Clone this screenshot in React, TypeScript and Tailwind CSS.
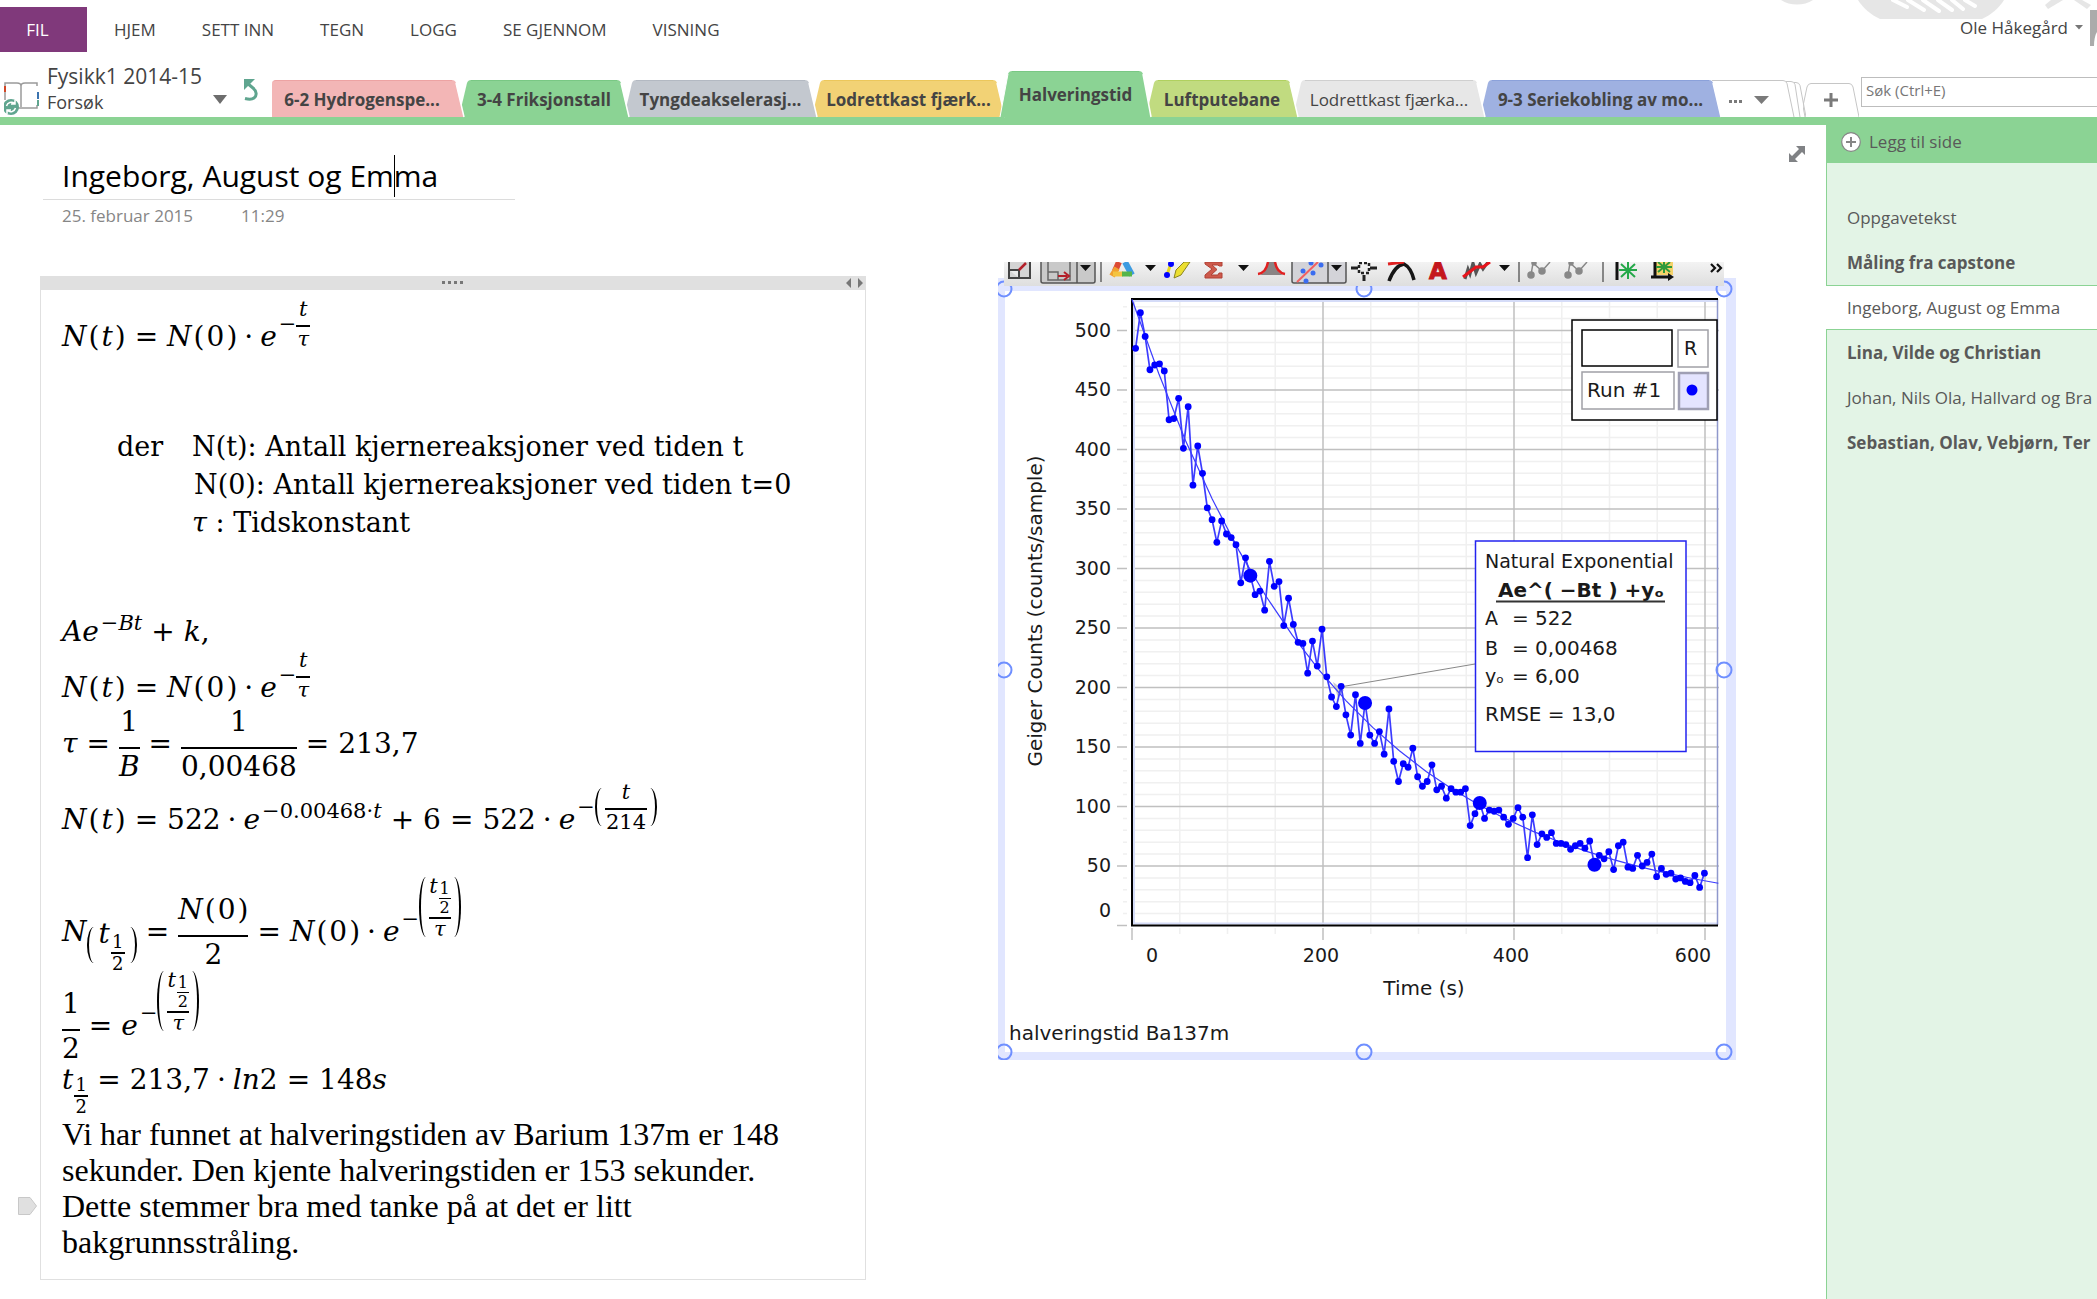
import React from 'react';
import clsx from 'clsx';

const MENU = ['HJEM', 'SETT INN', 'TEGN', 'LOGG', 'SE GJENNOM', 'VISNING'];

interface SectionTab {
  label: string;
  width: string;
  bg: string;
  fill: string;
  edge: string;
  bold: boolean;
  active?: boolean;
}

const TABS: SectionTab[] = [
  { label: '6-2 Hydrogenspe...', width: 'w-[192px]', bg: 'bg-[#f3b6b6]', fill: '#f3b6b6', edge: 'border-[#eda3a3]', bold: true },
  { label: '3-4 Friksjonstall', width: 'w-[170px]', bg: 'bg-[#8bd394]', fill: '#8bd394', edge: 'border-[#79c884]', bold: true },
  { label: 'Tyngdeakselerasj...', width: 'w-[193px]', bg: 'bg-[#c3c8cf]', fill: '#c3c8cf', edge: 'border-[#b3b9c2]', bold: true },
  { label: 'Lodrettkast fjærk...', width: 'w-[193px]', bg: 'bg-[#f2d275]', fill: '#f2d275', edge: 'border-[#ecc75b]', bold: true },
  { label: 'Halveringstid', width: 'w-[151px]', bg: 'bg-[#8bd394]', fill: '#8bd394', edge: 'border-[#79c884]', bold: true, active: true },
  { label: 'Luftputebane', width: 'w-[152px]', bg: 'bg-[#c1db80]', fill: '#c1db80', edge: 'border-[#b0d05f]', bold: true },
  { label: 'Lodrettkast fjærka...', width: 'w-[192px]', bg: 'bg-[#e7e7e7]', fill: '#e7e7e7', edge: 'border-[#cfcfcf]', bold: false },
  { label: '9-3 Seriekobling av mo...', width: 'w-[241px]', bg: 'bg-[#9fb1e1]', fill: '#9fb1e1', edge: 'border-[#8ba1da]', bold: true },
];

const PAGES = [
  { title: 'Oppgavetekst', bold: false },
  { title: 'Måling fra capstone', bold: true },
  { title: 'Ingeborg, August og Emma', bold: false, active: true },
  { title: 'Lina, Vilde og Christian', bold: true },
  { title: 'Johan, Nils Ola, Hallvard og Bra', bold: false },
  { title: 'Sebastian, Olav, Vebjørn, Ter', bold: true },
];

// Geiger counts, one sample every 5 s
const COUNTS = [
  485, 515, 495, 467, 471, 472, 466, 425, 426, 443, 401, 436, 370, 403, 380, 351, 341, 322, 340, 329,
  326, 320, 288, 309, 294, 278, 281, 265, 306, 285, 289, 252, 275, 253, 238, 237, 212, 239, 218, 249,
  209, 192, 184, 201, 177, 160, 194, 153, 187, 160, 153, 163, 144, 182, 138, 121, 136, 133, 149, 125,
  117, 121, 135, 114, 117, 107, 115, 112, 112, 115, 84, 94, 103, 90, 97, 96, 97, 91, 85, 90,
  99, 91, 57, 93, 68, 77, 74, 78, 69, 69, 68, 64, 67, 69, 65, 71, 51, 59, 56, 62,
  47, 67, 70, 49, 48, 59, 50, 53, 60, 41, 48, 43, 44, 39, 40, 37, 36, 42, 32, 44,
];

const px = (t: number) => 1132 + t * 0.955;
const py = (v: number) => 925.5 - v * 1.19;
const sampleX = (i: number) => 1135.6 + i * 4.78;

const Header: React.FC = () => (
  <header className="relative flex h-[52px] items-stretch pt-[7px]">
    {/* background decoration */}
    <svg className="absolute right-0 top-0" width="320" height="20" viewBox="1777 0 320 20" aria-hidden="true">
      <path d="M1781 0h32c-9 6-23 6-32 0z" fill="#e6e6e6" />
      <path d="M1858 0h146c-5 8-13 15-22 19h-102c-9-4-17-11-22-19z" fill="#e6e6e6" />
      <path d="M1893 0l14 7M1908 0l16 10M1923 0l16 11M1938 0l14 10M1952 0l11 9M1965 0l10 6" stroke="#fff" strokeWidth="4" strokeLinecap="round" />
      <path d="M2045 5l6-5h12l-15 9zM2074 0h8l9 5-4 4-13-9z" fill="#e6e6e6" />
    </svg>
    <nav className="flex items-stretch text-[17px] text-[#444]">
      <button className="w-[87px] bg-[#80397b] pr-3 text-white">FIL</button>
      <div className="flex pl-1">
        {MENU.map((m) => (
          <button key={m} className="px-[23px]">
            {m}
          </button>
        ))}
      </div>
    </nav>
    <button className="relative mb-1 ml-auto flex items-center gap-[7px] text-[17px] text-[#444]">
      Ole Håkegård
      <svg width="8" height="5" viewBox="0 0 8 5" aria-hidden="true">
        <path d="M0 0h8L4 4.5z" fill="#777" />
      </svg>
      <svg width="7" height="36" viewBox="0 0 7 36" aria-hidden="true">
        <path d="M0 0h7v22c-2 3-3 8-3 14H0z" fill="#ababab" />
      </svg>
    </button>
  </header>
);

const Tab: React.FC<{ tab: SectionTab; index: number }> = ({ tab, index }) => {
  const h = tab.active ? 46 : 37;
  return (
    <button
      className={clsx(
        'relative flex text-[17px] text-[#444]',
        tab.width,
        tab.active ? 'h-[46px]' : 'h-[37px]',
        index > 0 && '-ml-[5px]',
        tab.bold && 'font-bold',
      )}
      style={{ zIndex: tab.active ? 20 : 10 - index }}
    >
      {index > 0 && (
        <svg className="shrink-0 overflow-visible" width="12" height={h} viewBox={`0 0 12 ${h}`} aria-hidden="true">
          <path d={`M0 ${h}L8 3Q9 0 12 0V${h}z`} fill={tab.fill} />
          {tab.active && <path d={`M0 ${h}L8 3`} stroke="#fff" fill="none" />}
        </svg>
      )}
      <span
        className={clsx(
          'flex h-full flex-1 items-center justify-center whitespace-nowrap border-t',
          index === 0 && 'rounded-tl',
          !tab.active && 'pt-[2px]',
          tab.bg,
          tab.edge,
        )}
      >
        {tab.label}
      </span>
      <svg className="shrink-0 overflow-visible" width="12" height={h} viewBox={`0 0 12 ${h}`} aria-hidden="true">
        <path d={`M12 ${h}L4 3Q3 0 0 0V${h}z`} fill={tab.fill} />
        <path d={`M12 ${h}L4 3`} stroke="#fff" strokeWidth="1.5" fill="none" />
      </svg>
    </button>
  );
};

const SectionBar: React.FC = () => (
  <div className="flex h-[73px] items-end border-b-8 border-[#8bd394]">
    <div className="flex h-full w-[272px] shrink-0 items-end">
      <svg className="mb-px ml-1 shrink-0" width="36" height="36" viewBox="0 0 36 36" fill="none" aria-hidden="true">
        <path d="M1 6V3h12q4 0 4 3 0-3 4-3h12v3M17 6v21M12 28h21v-3M1 12v8" stroke="#9a9a9a" strokeWidth="1.5" />
        <path d="M1 6v6" stroke="#d24726" strokeWidth="2" />
        <path d="M34 12v7" stroke="#3b73af" strokeWidth="2" />
        <path d="M34 20v6" stroke="#5fa58f" strokeWidth="2" />
        <circle cx="7" cy="27" r="8" fill="#5fa58f" />
        <path d="M2.500 26a5 5 0 0 1 8-2.500M11.500 28a5 5 0 0 1-8 2.500M11 20v4H7M3 34v-4h4" stroke="#fff" strokeWidth="1.500" />
      </svg>
      <button className="ml-[7px] flex flex-1 items-end justify-between pb-[2px] text-left text-[#444]">
        <span>
          <span className="block whitespace-nowrap text-[21px] leading-7">Fysikk1 2014-15</span>
          <span className="block text-[18px] leading-[25px]">Forsøk</span>
        </span>
        <svg className="mb-[11px]" width="14" height="9" viewBox="0 0 14 9" aria-hidden="true">
          <path d="M0 0h14L7 9z" fill="#6d6d6d" />
        </svg>
      </button>
      <button className="mb-[16px] ml-[16px] mr-[13px]" aria-label="Angre">
        <svg width="16" height="22" viewBox="0 0 16 22" fill="none" aria-hidden="true">
          <path d="M4 4l6 5c4 3 4 8 1 10-2 1.500-5 1.500-9 .5" stroke="#5fa58f" strokeWidth="3" />
          <path d="M1 11V0h11z" fill="#5fa58f" />
        </svg>
      </button>
    </div>

    <nav className="relative flex shrink-0 items-end">
      {TABS.map((t, i) => (
        <Tab key={t.label} tab={t} index={i} />
      ))}
    </nav>

    {/* overflow stack */}
    <button className="relative -ml-[9px] flex h-[37px] w-[94px] shrink-0 items-center gap-[11px] pl-[17px] pt-[2px]" aria-label="Flere inndelinger">
      <svg className="absolute inset-0" width="94" height="37" viewBox="0 0 94 37" fill="none" aria-hidden="true">
        <path d="M0 .5h71q3 0 4 3L82 37M74 1.500h5q3 0 4 3L88 37M82 2.500h2q3 0 4 3L94 37" stroke="#c6c6c6" />
      </svg>
      <svg className="mt-1" width="14" height="4" viewBox="0 0 14 4" aria-hidden="true">
        <path d="M0 0h3v3H0zM5 0h3v3H5zM10 0h3v3h-3z" fill="#7a7a7a" />
      </svg>
      <svg width="15" height="8" viewBox="0 0 15 8" aria-hidden="true">
        <path d="M0 0h15L7.500 8z" fill="#7a7a7a" />
      </svg>
    </button>
    <button className="relative -ml-[3px] flex h-[34px] w-[56px] shrink-0 items-center justify-center" aria-label="Ny inndeling">
      <svg className="absolute inset-0" width="56" height="34" viewBox="0 0 56 34" fill="none" aria-hidden="true">
        <path d="M0 23L4 4q1-3.500 4-3.500h38q3 0 4 3.500l6 30M0 23l2 11" stroke="#c6c6c6" />
      </svg>
      <svg width="14" height="14" viewBox="0 0 14 14" aria-hidden="true">
        <path d="M7 0v14M0 7h14" stroke="#7a7a7a" strokeWidth="3" />
      </svg>
    </button>
    <input
      type="text"
      aria-label="Søk"
      placeholder="Søk (Ctrl+E)"
      className="mb-[10px] ml-[2px] h-[30px] min-w-0 flex-1 border border-r-0 border-[#bdbdbd] bg-white px-1 pb-1 text-[15px] text-[#666] outline-none placeholder:text-[#777]"
    />
  </div>
);

const SidePanel: React.FC = () => (
  <aside className="flex w-[271px] shrink-0 flex-col bg-[#e3f4e6]">
    <button className="flex h-[38px] items-center gap-2 bg-[#8bd394] pb-1 pl-[15px] text-left text-[17px] text-[#595959]">
      <svg width="20" height="20" viewBox="0 0 20 20" aria-hidden="true">
        <circle cx="10" cy="10" r="9.300" fill="#fff" stroke="#868686" strokeWidth="1.200" />
        <path d="M10 5v10M5 10h10" stroke="#868686" strokeWidth="2" />
      </svg>
      Legg til side
    </button>
    <div className="h-8 border-l border-[#8bd394]" />
    <ul>
      {PAGES.map((p) => (
        <li key={p.title}>
          <button
            className={clsx(
              'block h-[45px] w-full overflow-hidden whitespace-nowrap border-[#8bd394] text-left text-[17px] text-[#595959]',
              p.active ? 'border-y bg-white pl-[21px]' : 'border-l pl-5',
              p.bold && 'font-bold',
            )}
          >
            {p.title}
          </button>
        </li>
      ))}
    </ul>
    <div className="flex-1 border-l border-[#8bd394]" />
  </aside>
);

/* ---- formula parts ---- */

type Kids = { children: React.ReactNode };

const Row: React.FC<Kids & { className: string }> = ({ children, className }) => (
  <div className={clsx("flex items-center whitespace-nowrap font-['DejaVu_Serif',serif] text-[28px] leading-8", className)}>
    {children}
  </div>
);

const Eq: React.FC<Kids> = ({ children }) => <span className="px-[9px]">{children}</span>;

const Dot: React.FC = () => <span className="px-[7px]">·</span>;

// N(arg)
const N: React.FC<Kids> = ({ children }) => (
  <span className="flex gap-[2px]">
    <i>N</i>
    <span>(</span>
    {children}
    <span>)</span>
  </span>
);

const Frac: React.FC<{ top: React.ReactNode; bottom: React.ReactNode }> = ({ top, bottom }) => (
  <span className="flex flex-col items-center">
    <span className="pb-[9px]">{top}</span>
    <span className="h-[2px] w-full bg-black" />
    <span className="pt-[2px]">{bottom}</span>
  </span>
);

const SmallFrac: React.FC<{ top: React.ReactNode; bottom: React.ReactNode }> = ({ top, bottom }) => (
  <span className="flex flex-col items-center">
    <span className="pb-1">{top}</span>
    <span className="h-[2px] w-full bg-black" />
    <span className="px-px">{bottom}</span>
  </span>
);

const Half: React.FC = () => (
  <span className="flex flex-col items-center text-[18px] leading-5">
    <span>1</span>
    <span className="h-[2px] w-[14px] bg-black" />
    <span>2</span>
  </span>
);

const Exp: React.FC<Kids & { className?: string }> = ({ children, className = 'pb-[26px]' }) => (
  <span className={clsx('flex items-center pl-[2px] text-[21px] leading-6', className)}>{children}</span>
);

const Paren: React.FC<Kids & { className: string }> = ({ children, className }) => (
  <span className="flex items-center">
    <span className={clsx('w-[14px] rounded-[50%] border-l-2 border-black', className)} />
    <span className="-mx-1">{children}</span>
    <span className={clsx('w-[14px] rounded-[50%] border-r-2 border-black', className)} />
  </span>
);

const HalfLifeExp: React.FC = () => (
  <Exp className="pb-[50px]">
    <span className="-mb-6">−</span>
    <Paren className="h-[60px]">
      <span className="flex flex-col items-center">
        <span className="flex items-start">
          <i className="-mt-[2px]">t</i>
          <span className="flex flex-col items-center pl-px pt-1 text-[16px] leading-[18px]">
            <span>1</span>
            <span className="h-px w-3 bg-black" />
            <span>2</span>
          </span>
        </span>
        <span className="h-[2px] w-full bg-black" />
        <i className="leading-5">τ</i>
      </span>
    </Paren>
  </Exp>
);

const DecayLaw: React.FC = () => (
  <>
    <N><i>t</i></N>
    <Eq>=</Eq>
    <N>0</N>
    <Dot />
    <i>e</i>
    <Exp>
      <span>−</span>
      <SmallFrac top={<i>t</i>} bottom={<i>τ</i>} />
    </Exp>
  </>
);

const NoteBox: React.FC = () => (
  <section className="relative mt-[14px] w-[826px] shrink-0 border border-t-0 border-[#e0e0e0] text-black">
    <div className="relative flex h-[14px] items-center justify-center bg-[#e0e0e0]">
      <svg width="22" height="4" viewBox="0 0 22 4" aria-hidden="true">
        <path d="M0 0h3v3H0zM6 0h3v3H6zM12 0h3v3h-3zM18 0h3v3h-3z" fill="#777" />
      </svg>
      <svg className="absolute right-[2px] top-[2px]" width="17" height="10" viewBox="0 0 17 10" aria-hidden="true">
        <path d="M5 0v10L0 5zM12 0v10l5-5z" fill="#777" />
      </svg>
    </div>
    <svg className="absolute -left-[23px] top-[921px]" width="19" height="18" viewBox="0 0 19 18" aria-hidden="true">
      <path d="M.5.5H12L18.500 9 12 17.500H.5z" fill="#e0e0e0" stroke="#c8c8c8" />
    </svg>

    <div className="px-[21px] pb-[19px] pt-px">
      <Row className="h-[92px]"><DecayLaw /></Row>
      <div className="grid grid-cols-[75px_1fr] whitespace-nowrap pb-[62px] pl-[55px] pt-[45px] font-['DejaVu_Serif',serif] text-[27px] leading-[38px]">
        <p>der</p>
        <p>N(t): Antall kjernereaksjoner ved tiden t</p>
        <p className="col-start-2 pl-[2px]">N(0): Antall kjernereaksjoner ved tiden t=0</p>
        <p className="col-start-2"><i>τ</i> : Tidskonstant</p>
      </div>
      <Row className="h-14">
        <i>Ae</i>
        <Exp className="pb-[18px]"><span>−<i>Bt</i></span></Exp>
        <Eq>+</Eq>
        <span><i>k</i>,</span>
      </Row>
      <Row className="h-14"><DecayLaw /></Row>
      <Row className="h-14">
        <i>τ</i>
        <Eq>=</Eq>
        <Frac top="1" bottom={<i>B</i>} />
        <Eq>=</Eq>
        <Frac top="1" bottom="0,00468" />
        <Eq>=</Eq>
        <span>213,7</span>
      </Row>
      <Row className="h-24">
        <N><i>t</i></N>
        <Eq>=</Eq>
        <span>522</span>
        <Dot />
        <i>e</i>
        <Exp className="pb-[18px]"><span>−0.00468·<i>t</i></span></Exp>
        <Eq>+</Eq>
        <span>6</span>
        <Eq>=</Eq>
        <span>522</span>
        <Dot />
        <i>e</i>
        <Exp>
          <span>−</span>
          <Paren className="h-[38px]">
            <SmallFrac top={<i>t</i>} bottom="214" />
          </Paren>
        </Exp>
      </Row>
      <Row className="h-32">
        <i>N</i>
        <span className="flex pt-[26px]">
          <Paren className="h-9">
            <span className="flex items-start px-[2px]">
              <i className="-mt-3">t</i>
              <span className="-mb-[14px] pl-px pt-[2px]"><Half /></span>
            </span>
          </Paren>
        </span>
        <Eq>=</Eq>
        <Frac top={<N>0</N>} bottom="2" />
        <Eq>=</Eq>
        <N>0</N>
        <Dot />
        <i>e</i>
        <HalfLifeExp />
      </Row>
      <Row className="h-[60px]">
        <Frac top="1" bottom="2" />
        <Eq>=</Eq>
        <i>e</i>
        <HalfLifeExp />
      </Row>
      <Row className="h-12">
        <i>t</i>
        <span className="pl-px pt-8"><Half /></span>
        <Eq>=</Eq>
        <span>213,7</span>
        <Dot />
        <span><i>ln</i>2</span>
        <Eq>=</Eq>
        <span>148<i>s</i></span>
      </Row>
      <p className="pt-3 font-['Liberation_Serif',serif] text-[32px] leading-9">
        Vi har funnet at halveringstiden av Barium 137m er 148
        <br />
        sekunder. Den kjente halveringstiden er 153 sekunder.
        <br />
        Dette stemmer bra med tanke på at det er litt
        <br />
        bakgrunnsstråling.
      </p>
    </div>
  </section>
);

/* ---- pasted capstone graph ---- */

const ToolStrip: React.FC = () => (
  <g>
    <rect x="1004" y="262" width="720" height="24" fill="url(#strip)" />
    {/* scale */}
    <path d="M1009 262v16h21v-16M1009 270h10v8" fill="#d4d4d4" stroke="#444" strokeWidth="2" />
    <path d="M1019 270l7-7" stroke="#b3202a" strokeWidth="2.500" />
    <path d="M1041 262v19q0 2 2 2h50q2 0 2-2v-19M1077 262v21" fill="#c9c9c9" stroke="#555" strokeWidth="1.500" />
    <path d="M1048 262v18h10v-8h-10M1058 280h12v-18" fill="none" stroke="#666" strokeWidth="1.500" />
    <path d="M1058 276h9m-3-4l5 4-5 4" fill="none" stroke="#b3202a" strokeWidth="2" />
    <path d="M1101 262v20M1519 262v20M1603 262v20" stroke="#666" strokeWidth="1.500" />
    <path d="M1080 265h11l-5.500 6zM1145 265h11l-5.500 6zM1238 265h11l-5.500 6zM1331 265h11l-5.500 6zM1499 265h11l-5.500 6z" fill="#111" />
    {/* colour triangle */}
    <path d="M1119 262l-4 9" stroke="#dc4a35" strokeWidth="6" />
    <path d="M1117 268l-5 8" stroke="#f0a030" strokeWidth="6" />
    <path d="M1125 262l7 13" stroke="#3d9be0" strokeWidth="6" />
    <path d="M1113 274h10" stroke="#f4c440" strokeWidth="5" />
    <path d="M1122 274h10" stroke="#55b54a" strokeWidth="5" />
    {/* highlighter */}
    <path d="M1171 263l-4 12" stroke="#e8d820" strokeWidth="3" />
    <path d="M1174 278l2-8 8-8h6l-9 13z" fill="#ecdf30" stroke="#8a8420" />
    <circle cx="1171" cy="264" r="3" fill="#00f" />
    <circle cx="1167" cy="275" r="3" fill="#00f" />
    {/* sum */}
    <path d="M1205 262h17v4h-3l-1-1h-6l5 4.500-6 5.500h7l1-2h3v5h-17v-3l7-6-7-5z" fill="#cd5a4c" stroke="#b04034" />
    {/* peak area */}
    <path d="M1259 275c6-1 8-7 9-13h7c1 6 3 12 9 13z" fill="#8a8484" />
    <path d="M1258 274c7-1 9-6 10-12M1275 262c1 6 4 11 10 12" fill="none" stroke="#e02020" strokeWidth="2.500" />
    {/* fit */}
    <path d="M1292 262v19q0 2 2 2h50q2 0 2-2v-19M1328 262v21" fill="#d3d3d8" stroke="#555" strokeWidth="1.500" />
    <path d="M1331 265h11l-5.500 6z" fill="#111" />
    <path d="M1297 282l21-20" stroke="#f26060" strokeWidth="2" />
    <g fill="#3a6cf0">
      <circle cx="1303" cy="271" r="2.500" />
      <circle cx="1311" cy="263" r="2.500" />
      <circle cx="1321" cy="265" r="2.500" />
      <circle cx="1313" cy="273" r="2.500" />
      <circle cx="1306" cy="281" r="2.500" />
    </g>
    {/* crosshair */}
    <path d="M1351 268h7M1370 268h7M1364 275v6" stroke="#222" strokeWidth="3" />
    <rect x="1359" y="263" width="10" height="10" fill="none" stroke="#222" strokeWidth="2.500" strokeDasharray="3 2" />
    {/* tangent */}
    <path d="M1389 281c4-11 9-16 15-17 4 2 8 8 10 16" fill="none" stroke="#161616" strokeWidth="3.500" />
    <path d="M1388 264l16-2" stroke="#e02020" strokeWidth="3" />
    {/* annotation letter */}
    <text x="1438" y="279" textAnchor="middle" fontSize="23" fontWeight="bold" fill="#c4161c" stroke="#c4161c">A</text>
    {/* noise */}
    <path d="M1465 279l3-10 2 5 3-11 3 10 4-9 3 5 5-7" fill="none" stroke="#555" strokeWidth="3" />
    <path d="M1463 277l13-10h7l7-5" fill="none" stroke="#e8141c" strokeWidth="3" />
    {/* point pairs */}
    <g fill="#888" stroke="#888" strokeWidth="1.500">
      <path d="M1531 275l2-12 9 8 8-9M1568 275l2-12 9 8 8-9" fill="none" />
      <circle cx="1531" cy="275" r="3" />
      <circle cx="1534" cy="263" r="2" />
      <circle cx="1542" cy="271" r="3" />
      <circle cx="1568" cy="275" r="3" />
      <circle cx="1571" cy="263" r="2" />
      <circle cx="1579" cy="271" r="3" />
    </g>
    {/* axis markers */}
    <path d="M1617 262v18" stroke="#111" strokeWidth="3" />
    <path d="M1619 270h18M1628 262v17M1621 264l14 13M1635 264l-14 13" stroke="#25a84a" strokeWidth="2" />
    <rect x="1655" y="262" width="18" height="13" fill="#f5d26a" />
    <path d="M1655 262v16M1651 277h20" stroke="#111" strokeWidth="3" />
    <path d="M1668 273l6 4-6 4z" fill="#111" />
    <path d="M1656 267h16M1664 262v11M1658 262l12 10M1670 262l-12 10" stroke="#2f9a3c" strokeWidth="2" />
    <path d="M1711 264l4 4-4 4M1717 264l4 4-4 4" fill="none" stroke="#111" strokeWidth="2.200" />
  </g>
);

const FitGraph: React.FC = () => {
  const majorsY = [0, 50, 100, 150, 200, 250, 300, 350, 400, 450, 500];
  const minorsY = Array.from({ length: 52 }, (_, i) => (i + 1) * 10).filter((v) => v % 50 !== 0);
  const minorsX = [50, 100, 150, 250, 300, 350, 450, 500, 550];
  const line = COUNTS.map((v, i) => `${sampleX(i)},${py(v)}`).join(' ');
  const fit = Array.from({ length: 23 }, (_, i) => {
    const t = Math.min(i * 28, 614);
    return `${px(t)},${py(Math.min(526, 522 * Math.exp(-0.00468 * t) + 6))}`;
  }).join(' ');

  return (
    <svg
      className="w-[738px] shrink-0"
      viewBox="998 262 738 798"
      fontFamily="'DejaVu Sans', sans-serif"
      fontSize="19"
      fill="#1a1a1a"
      role="img"
      aria-label="halveringstid Ba137m"
    >
      <defs>
        <linearGradient id="strip" x1="0" y1="0" x2="0" y2="1">
          <stop offset="0" stopColor="#f3f3f3" />
          <stop offset="1" stopColor="#dedede" />
        </linearGradient>
      </defs>

      {/* selection frame */}
      <rect x="998" y="278" width="738" height="782" fill="#e1e6ff" />
      <rect x="1005" y="291" width="721" height="761" fill="#fff" />

      {/* grid */}
      <g stroke="#f0f0f0" strokeWidth="1.500">
        {minorsY.map((v) => (
          <path key={v} d={`M1123 ${py(v)}h4M1133 ${py(v)}h584`} />
        ))}
        {minorsX.map((t) => (
          <path key={t} d={`M${px(t)} 299v626M${px(t)} 928v6`} />
        ))}
      </g>
      <g stroke="#c0c0c0" strokeWidth="1.500">
        {majorsY.map((v) => (
          <path key={v} d={v ? `M1117 ${py(v)}h10M1133 ${py(v)}h586` : 'M1117 925.5h10'} />
        ))}
        {[0, 200, 400, 600].map((t) => (
          <path key={t} d={t ? `M${px(t)} 299v626M${px(t)} 928v12` : `M${px(t)} 928v12`} />
        ))}
      </g>
      <path d="M1134 924V301h583M1134 923.500h583" fill="none" stroke="#d5dcf8" strokeWidth="2" />
      <path d="M1717.500 299v626" stroke="#8f98cc" strokeWidth="1.500" />
      <path d="M1718 299H1132v626.500h586" fill="none" stroke="#000" strokeWidth="2" />

      {/* data */}
      <path d="M1334 688l141-24" stroke="#888" />
      <path d="M1333 682l11 8-6 8z" fill="#ccc" />
      <polyline points={fit} fill="none" stroke="#3c3cff" strokeWidth="1.200" />
      <polyline points={line} fill="none" stroke="#3c3cff" strokeWidth="1.700" />
      <g fill="#00f">
        {COUNTS.map((v, i) => (
          <circle key={i} cx={sampleX(i)} cy={py(v)} r={i % 24 === 0 && i > 0 ? 7 : 3.4} />
        ))}
      </g>

      {/* axes */}
      {majorsY.map((v) => (
        <text key={v} x="1111" y={v ? py(v) + 6 : 917} textAnchor="end">{v}</text>
      ))}
      <text x="1152" y="962" textAnchor="middle">0</text>
      <text x="1321" y="962" textAnchor="middle">200</text>
      <text x="1511" y="962" textAnchor="middle">400</text>
      <text x="1693" y="962" textAnchor="middle">600</text>
      <text x="1424" y="995" textAnchor="middle" fontSize="20">Time (s)</text>
      <text transform="translate(1042 611) rotate(-90)" textAnchor="middle" fontSize="20">Geiger Counts (counts/sample)</text>
      <text x="1009" y="1040" fontSize="20">halveringstid Ba137m</text>

      {/* legend */}
      <rect x="1572" y="320" width="145" height="100" fill="#fff" stroke="#000" strokeWidth="1.500" />
      <rect x="1582" y="330" width="90" height="36" fill="#fff" stroke="#000" strokeWidth="1.500" />
      <rect x="1678" y="330" width="30" height="37" fill="#fff" stroke="#a0a0a6" strokeWidth="1.500" />
      <rect x="1582" y="372" width="92" height="37" fill="#fff" stroke="#a0a0a6" strokeWidth="1.500" />
      <rect x="1679" y="373" width="29" height="36" fill="#e4e4ff" stroke="#9f9fb4" strokeWidth="2.500" />
      <circle cx="1692" cy="390" r="5.500" fill="#00f" />
      <text x="1684" y="355">R</text>
      <text x="1587" y="397" fontSize="20">Run #1</text>

      {/* fit box */}
      <rect x="1475.500" y="541" width="210.500" height="210.500" fill="#fff" stroke="#2323f0" strokeWidth="1.500" />
      <text x="1485" y="568">Natural Exponential</text>
      <text x="1581" y="597" textAnchor="middle" fontWeight="bold" fontSize="20">Ae^( −Bt ) +yₒ</text>
      <path d="M1496 601.500h169" stroke="#333" strokeWidth="2" />
      <text x="1485" y="625">A</text>
      <text x="1512" y="625" fontSize="20">= 522</text>
      <text x="1485" y="655">B</text>
      <text x="1512" y="655" fontSize="20">= 0,00468</text>
      <text x="1485" y="683">yₒ</text>
      <text x="1512" y="683" fontSize="20">= 6,00</text>
      <text x="1485" y="721" fontSize="20">RMSE = 13,0</text>

      {/* resize handles */}
      <g fill="none" stroke="#6f8fff" strokeWidth="2">
        {[1004, 1364, 1724].map((x) => (
          <g key={x}>
            <circle cx={x} cy="289" r="7.500" />
            <circle cx={x} cy="1052" r="7.500" />
            {x !== 1364 && <circle cx={x} cy="670" r="7.500" />}
          </g>
        ))}
      </g>
      <ToolStrip />
    </svg>
  );
};

const App: React.FC = () => (
  <div className="flex min-h-screen flex-col overflow-hidden bg-white font-['Open_Sans',sans-serif]">
    <Header />
    <SectionBar />
    <div className="flex flex-1">
      <main className="relative min-w-0 flex-1 overflow-hidden pb-[19px]">
        <button className="absolute right-5 top-5" aria-label="Full side">
          <svg width="18" height="18" viewBox="0 0 18 18" aria-hidden="true">
            <path d="M8 1h9v9l-3-3-7 7 3 3H1V8l3 3 7-7z" fill="#808285" />
          </svg>
        </button>
        <div className="ml-[43px] w-[472px] border-b border-[#dcdcdc] pb-[2px] pl-[19px] pt-[30px]">
          <h1 className="flex whitespace-nowrap text-[30px] leading-[42px] text-black">
            Ingeborg, August og Em
            <span className="-mr-px w-px bg-black" />
            ma
          </h1>
        </div>
        <div className="flex h-[62px] gap-12 pl-[62px] pt-1 text-[17px] leading-6 text-[#868686]">
          <span>25. februar 2015</span>
          <span>11:29</span>
        </div>
        <div className="flex items-start gap-[132px] pl-10">
          <NoteBox />
          <FitGraph />
        </div>
      </main>
      <SidePanel />
    </div>
  </div>
);

export default App;
